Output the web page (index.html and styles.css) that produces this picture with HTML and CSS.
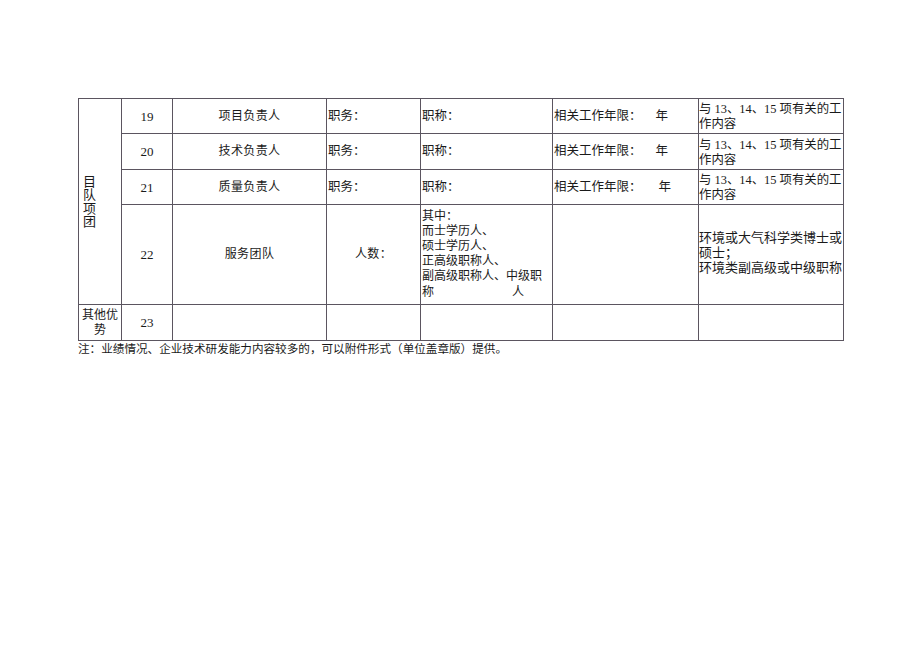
FILE: index.html
```html
<!DOCTYPE html>
<html lang="zh">
<head>
<meta charset="utf-8">
<title>项目团队</title>
<link rel="stylesheet" href="styles.css">
</head>
<body>
<div class="page">
  <table class="grid">
    <colgroup>
      <col class="c1"><col class="c2"><col class="c3"><col class="c4"><col class="c5"><col class="c6"><col class="c7">
    </colgroup>
    <tr class="r-short">
      <td rowspan="4" class="group"><span>目</span><span>队</span><span>项</span><span>团</span></td>
      <td class="num">19</td>
      <td class="label">项目负责人</td>
      <td class="left">职务：</td>
      <td class="left">职称：</td>
      <td class="left years">相关工作年限：<span class="yr">年</span></td>
      <td class="note-cell">与 13、14、15 项有关的工<br>作内容</td>
    </tr>
    <tr class="r-short2">
      <td class="num">20</td>
      <td class="label">技术负责人</td>
      <td class="left">职务：</td>
      <td class="left">职称：</td>
      <td class="left years">相关工作年限：<span class="yr">年</span></td>
      <td class="note-cell">与 13、14、15 项有关的工<br>作内容</td>
    </tr>
    <tr class="r-short">
      <td class="num">21</td>
      <td class="label">质量负责人</td>
      <td class="left">职务：</td>
      <td class="left">职称：</td>
      <td class="left years">相关工作年限：<span class="yr yr2">年</span></td>
      <td class="note-cell">与 13、14、15 项有关的工<br>作内容</td>
    </tr>
    <tr class="r-tall">
      <td class="num">22</td>
      <td class="label">服务团队</td>
      <td class="label">人数：</td>
      <td class="list">其中：<br>而士学历人、<br>硕士学历人、<br>正高级职称人、<br>副高级职称人、中级职<br><span class="last">称<span class="ren">人</span></span></td>
      <td></td>
      <td class="req">环境或大气科学类博士或<br>硕士；<br>环境类副高级或中级职称</td>
    </tr>
    <tr class="r-short2">
      <td class="other">其他优势</td>
      <td class="num">23</td>
      <td></td>
      <td></td>
      <td></td>
      <td></td>
      <td></td>
    </tr>
  </table>
  <p class="footnote">注：业绩情况、企业技术研发能力内容较多的，可以附件形式（单位盖章版）提供。</p>
</div>
</body>
</html>
```

FILE: styles.css
```css
html, body {
  margin: 0;
  padding: 0;
  background: #ffffff;
}

body {
  font-family: "Liberation Serif", "Noto Sans CJK SC", serif;
  color: #1a1a1a;
}

.page {
  padding: 98px 0 0 78px;
}

.grid {
  border-collapse: collapse;
  table-layout: fixed;
  width: 765px;
  font-size: 12.5px;
}

.c1 { width: 43px; }
.c2 { width: 51px; }
.c3 { width: 154px; }
.c4 { width: 94px; }
.c5 { width: 132px; }
.c6 { width: 146px; }
.c7 { width: 145px; }

.grid td {
  border: 1px solid #5b5560;
  padding: 0;
  vertical-align: middle;
  line-height: 15px;
}

.r-short { height: 35px; }
.r-short2 { height: 36px; }
.r-tall { height: 100px; }

.group {
  padding-left: 4px !important;
  font-size: 13px;
}

.group span {
  display: block;
  line-height: 12.5px;
  padding-top: 1px;
}

.num {
  text-align: center;
  font-size: 13px;
  font-family: "Liberation Serif", serif;
}

.label {
  text-align: center;
  font-size: 12px;
  letter-spacing: 0.4px;
}

.left {
  text-align: left;
  font-size: 12.5px;
  padding-left: 1px !important;
}

.yr {
  margin-left: 14px;
}

.yr2 {
  margin-left: 17px;
}

.note-cell {
  font-size: 12.4px;
  white-space: nowrap;
  overflow: visible;
  padding-top: 2px !important;
  line-height: 15.5px;
}

.list {
  font-size: 12px;
  line-height: 16.8px;
  padding-left: 1px !important;
  vertical-align: top;
  white-space: nowrap;
}

.list .last {
  display: block;
  line-height: 16px;
}

.list .ren {
  margin-left: 78px;
}

.req {
  font-size: 13px;
  line-height: 16px;
  white-space: nowrap;
  padding-bottom: 4px !important;
}

.other {
  text-align: center;
  font-size: 12px;
  line-height: 15px;
  padding: 0 2px !important;
}

.footnote {
  margin: 0;
  font-size: 11.6px;
  line-height: 16px;
  padding-top: 1px;
}
```
